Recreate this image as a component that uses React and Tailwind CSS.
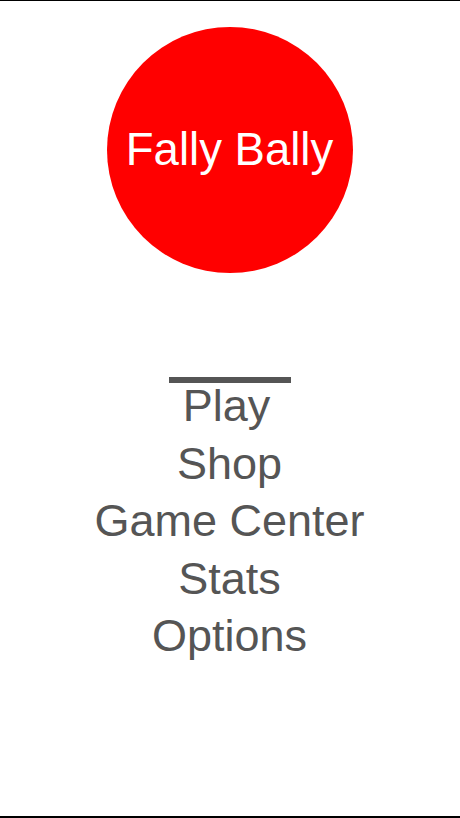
import React from 'react';

const MENU = ['Play', 'Shop', 'Game Center', 'Stats', 'Options'];

const App = () => {
    return (
        <div className="w-[460px] h-[818px] bg-white flex flex-col items-center border-t border-black border-b-2 overflow-hidden"
            style={{ fontFamily: '"Liberation Sans", Arial, sans-serif' }}>
            {/* ── Logo ball ── */}
            <div className="mt-[26px] ml-[-1px] w-[246px] h-[246px] rounded-full bg-[#ff0000] flex items-center justify-center">
                <span className="text-white text-[45.5px]">Fally Bally</span>
            </div>

            {/* ── Menu ── */}
            <div className="mt-[104px] flex flex-col items-center">
                <div className="w-[122px] h-[6px] bg-[#555555]" />
                <ul className="-mt-[6px] -ml-[1px] flex flex-col items-center text-[45px] leading-[57.5px] text-[#555555]">
                    {MENU.map((item) => (
                        <li key={item} className={item === 'Play' ? '-ml-[6px]' : ''}>{item}</li>
                    ))}
                </ul>
            </div>
        </div>
    );
};

export default App;
